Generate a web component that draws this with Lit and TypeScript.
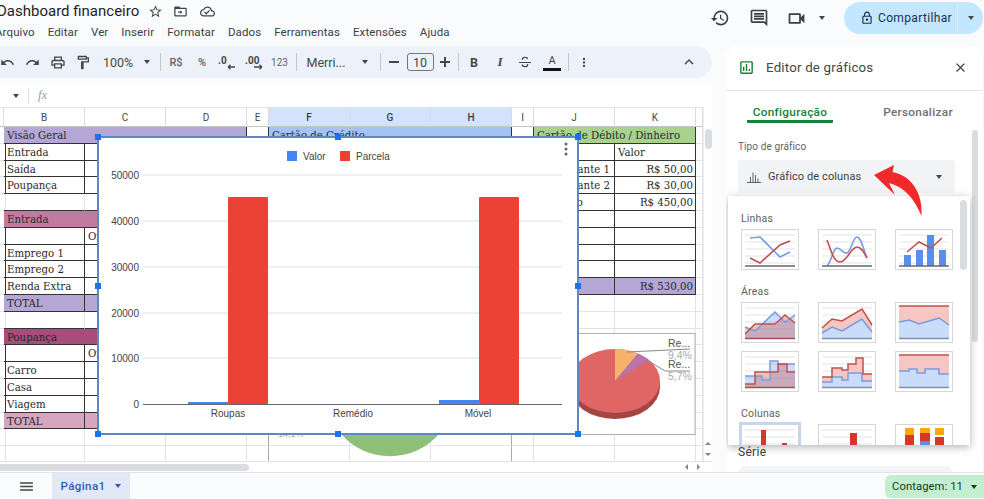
import { LitElement, html, css, svg, nothing } from "lit";
import { customElement } from "lit/decorators.js";
import { styleMap } from "lit/directives/style-map.js";

const ic = (d: string, s = 18, c = "#444746") => html`<svg width=${s} height=${s} viewBox="0 0 24 24" fill=${c}><path d=${d}></path></svg>`;
const P = {
  undo: "M12.5 8c-2.65 0-5.05.99-6.9 2.6L2 7v9h9l-3.62-3.62c1.39-1.16 3.16-1.88 5.12-1.88 3.54 0 6.55 2.31 7.6 5.5l2.37-.78C21.08 11.03 17.15 8 12.5 8z",
  redo: "M18.4 10.6C16.55 8.99 14.15 8 11.5 8c-4.65 0-8.58 3.03-9.96 7.22L3.9 16c1.05-3.19 4.05-5.5 7.6-5.5 1.95 0 3.73.72 5.12 1.88L13 16h9V7l-3.6 3.6z",
  print: "M19 8h-1V3H6v5H5c-1.66 0-3 1.34-3 3v6h4v4h12v-4h4v-6c0-1.66-1.34-3-3-3zM8 5h8v3H8V5zm8 12v2H8v-4h8v2zm2-2v-2H6v2H4v-4c0-.55.45-1 1-1h14c.55 0 1 .45 1 1v4h-2z",
  paint: "M18 4V3c0-.55-.45-1-1-1H5c-.55 0-1 .45-1 1v4c0 .55.45 1 1 1h12c.55 0 1-.45 1-1V6h1v4H9v11c0 .55.45 1 1 1h2c.55 0 1-.45 1-1v-9h8V4h-3zm-2 2H6V4h10v2zm-5 14h-.01v-8H11v8z",
  star: "M22 9.24l-7.19-.62L12 2 9.19 8.63 2 9.24l5.46 4.73L5.82 21 12 17.27 18.18 21l-1.63-7.03L22 9.24zM12 15.4l-3.76 2.27 1-4.28-3.32-2.88 4.38-.38L12 6.1l1.71 4.04 4.38.38-3.32 2.88 1 4.28L12 15.4z",
  folder: "M20 6h-8l-2-2H4c-1.1 0-2 .9-2 2v12c0 1.1.9 2 2 2h16c1.1 0 2-.9 2-2V8c0-1.1-.9-2-2-2zm0 12H4V8h16v10zM12 10v2H8v2h4v2l3-3z",
  cloud: "M19.35 10.04C18.67 6.59 15.64 4 12 4 9.11 4 6.6 5.64 5.35 8.04 2.34 8.36 0 10.91 0 14c0 3.31 2.69 6 6 6h13c2.76 0 5-2.24 5-5 0-2.64-2.05-4.78-4.65-4.96zM19 18H6c-2.21 0-4-1.79-4-4 0-2.05 1.53-3.76 3.56-3.97l1.07-.11.5-.95C8.08 7.14 9.94 6 12 6c2.62 0 4.88 1.86 5.39 4.43l.3 1.5 1.53.11c1.56.1 2.78 1.41 2.78 2.96 0 1.65-1.35 3-3 3zm-9-3.82L7.91 12.09 6.5 13.5 10 17l6.01-6.01-1.41-1.41z",
  history: "M13 3a9 9 0 0 0-9 9H1l3.89 3.89.07.14L9 12H6c0-3.87 3.13-7 7-7s7 3.13 7 7-3.13 7-7 7c-1.93 0-3.68-.79-4.94-2.06l-1.42 1.42A8.954 8.954 0 0 0 13 21a9 9 0 0 0 0-18zm-1 5v5l4.28 2.54.72-1.21-3.5-2.08V8H12z",
  comment: "M21.99 4c0-1.1-.89-2-1.99-2H4c-1.1 0-2 .9-2 2v12c0 1.1.9 2 2 2h14l4 4-.01-18zM20 4v13.17L18.83 16H4V4h16zM6 12h12v2H6zm0-3h12v2H6zm0-3h12v2H6z",
  video: "M17 10.5V7c0-.55-.45-1-1-1H4C3.45 6 3 6.45 3 7v10c0 .55.45 1 1 1h12c.55 0 1-.45 1-1v-3.5l4 4v-11l-4 4zM15 16H5V8h10v8z",
  lock: "M18 8h-1V6c0-2.76-2.24-5-5-5S7 3.24 7 6v2H6c-1.1 0-2 .9-2 2v10c0 1.1.9 2 2 2h12c1.1 0 2-.9 2-2V10c0-1.1-.9-2-2-2zM9 6c0-1.66 1.34-3 3-3s3 1.34 3 3v2H9V6zm9 14H6V10h12v10zm-6-3c1.1 0 2-.9 2-2s-.9-2-2-2-2 .9-2 2 .9 2 2 2z",
  close: "M19 6.41L17.59 5 12 10.59 6.41 5 5 6.41 10.59 12 5 17.59 6.41 19 12 13.41 17.59 19 19 17.59 13.41 12z",
  strike: "M3 12h18v1.6H3zM7 7.5C7 5.4 9.2 4 12 4c2.6 0 4.5 1.2 4.9 3.3l-2 .4C14.6 6.500 13.500 6 12 6c-1.600 0-2.900.7-2.900 1.700 0 .4.100.8.400 1.100H7.300C7.100 8.400 7 8 7 7.500zM17 16c0 2.400-2.200 4-5 4-2.800 0-5-1.300-5.400-3.800l2-.3C8.900 17.300 10.200 18 12 18c1.700 0 3-.8 3-2 0-.3-.1-.6-.2-.9h2c.1.300.2.600.2.900z",
  kebab: "M12 8a2 2 0 1 0 0-4 2 2 0 0 0 0 4zm0 2a2 2 0 1 0 0 4 2 2 0 0 0 0-4zm0 6a2 2 0 1 0 0 4 2 2 0 0 0 0-4z",
  chev: "M7.41 15.41L12 10.83l4.59 4.58L18 14l-6-6-6 6z",
  menu: "M3 18h18v-2H3v2zm0-5h18v-2H3v2zm0-7v2h18V6H3z",
};

const G = "#e3e3e3";
const gridLines = (ys: number[]) => ys.map((y) => svg`<line x1="4" x2="54" y1=${y} y2=${y} stroke=${G} stroke-width="1"></line>`);
const BL = "#7b9be0", RD = "#c0504d";
function area(blue: string, red: string, stacked = false) {
  const fill = (p: string) => `4,36 ${p} 54,36`;
  return svg`${gridLines([6, 13, 20, 27])}
    ${stacked ? svg`<polygon points=${fill(red)} fill="#f5c6c2"/><polygon points=${fill(blue)} fill="#c9dcf9"/>` : svg`<polygon points=${fill(blue)} fill="#5b8def" fill-opacity=".3"/><polygon points=${fill(red)} fill="#c0504d" fill-opacity=".35"/>`}
    <polyline points=${blue} fill="none" stroke=${BL} stroke-width="1.5"/><polyline points=${red} fill="none" stroke=${RD} stroke-width="1.5"/>
    <line x1="4" x2="54" y1="36.500" y2="36.500" stroke=${stacked ? "#8090a8" : "#a05050"} stroke-width="1.4"/>`;
}
function area100(blue: string) {
  return svg`<rect x="4" y="4" width="50" height="32" fill="#f5c6c2"/><polygon points=${`4,36 ${blue} 54,36`} fill="#c9dcf9"/>
    <polyline points=${blue} fill="none" stroke=${BL} stroke-width="1.5"/><line x1="4" x2="54" y1="4" y2="4" stroke=${RD} stroke-width="1.5"/>
    <line x1="4" x2="54" y1="36.500" y2="36.500" stroke="#8090a8" stroke-width="1.4"/>`;
}
const thumbs: Record<string, unknown> = {
  l1: svg`${gridLines([6, 13, 20, 27, 34])}<polyline points="9,9 19,8 39,28 49,23" fill="none" stroke=${BL} stroke-width="1.6"/><polyline points="9,29 19,34 39,16 49,12" fill="none" stroke=${RD} stroke-width="1.6"/><line x1="4" x2="54" y1="37" y2="37" stroke="#666" stroke-width="1.4"/>`,
  l2: svg`${gridLines([6, 13, 20, 27, 34])}<path d="M9 37C14 32 15 19 19 19C23 19 25 25 29 24C33 23 35 8 39 8C43 8 46 22 49 29" fill="none" stroke=${BL} stroke-width="1.6"/><path d="M9 11C12 18 15 33 22 33C29 33 33 18 39 18C44 18 46 24 49 29" fill="none" stroke=${RD} stroke-width="1.6"/><line x1="4" x2="54" y1="37" y2="37" stroke="#666" stroke-width="1.4"/>`,
  l3: svg`${gridLines([6, 13, 20, 27, 34])}<g fill="#5b8def"><rect x="9" y="26" width="7" height="11"/><rect x="21" y="21" width="7" height="16"/><rect x="32" y="6" width="7" height="31"/><rect x="44" y="21" width="7" height="16"/></g><polyline points="12,23 24,13 36,19 47,9" fill="none" stroke=${RD} stroke-width="1.6"/><line x1="4" x2="54" y1="37" y2="37" stroke="#666" stroke-width="1.4"/>`,
  a1: area("4,25 14,29 34,10 44,20 54,13", "4,32 14,22 34,22 44,13 54,21"),
  a2: area("4,31 14,25 24,29 44,17 54,30", "4,26 14,17 24,19 44,7 54,23", true),
  a3: area100("4,20 14,18 24,22 44,16 54,23"),
  s1: area("4,25 21,25 21,29 29,29 29,10 37,10 37,13 54,13", "4,33 14,33 14,21 37,21 37,13 46,13 46,21 54,21"),
  s2: area("4,31 14,31 14,26 24,26 24,29 30,29 30,22 44,22 44,30 54,30", "4,26 14,26 14,17 24,17 24,19 30,19 30,13 38,13 38,7 45,7 45,23 54,23", true),
  s3: area100("4,20 14,20 14,18 22,18 22,22 30,22 30,18 44,18 44,23 54,23"),
  c1: svg`${gridLines([6, 13, 20, 27, 34])}<g fill="#d9362b"><rect x="20" y="6" width="5" height="31"/><rect x="41" y="19" width="5" height="18"/></g>`,
  c2: svg`${gridLines([6, 13, 20, 27, 34])}<g fill="#d9362b"><rect x="32" y="9" width="7" height="28"/><rect x="21" y="21" width="5" height="16"/></g>`,
  c3: svg`<g fill="#f7a90c"><rect x="10" y="4" width="9" height="7"/><rect x="25" y="4" width="10" height="7"/><rect x="40" y="4" width="9" height="7"/></g><g fill="#d9362b"><rect x="10" y="11" width="9" height="26"/><rect x="25" y="9" width="10" height="8"/><rect x="40" y="13" width="9" height="24"/></g><rect x="25" y="17" width="10" height="20" fill="#5b8def"/>`,
};

type Tool = { c: number; w: number; t: unknown; k?: string };
const tools: Tool[] = [
  { c: 7, w: 16, t: ic(P.undo, 15) },
  { c: 32, w: 16, t: ic(P.redo, 15) },
  { c: 58, w: 16, t: ic(P.print, 17) },
  { c: 83, w: 16, t: ic(P.paint, 17) },
  { c: 118, w: 34, t: "100%", k: "txt" },
  { c: 147, w: 10, t: html`<i class="caret"></i>` },
  { c: 160.5, w: 1, t: nothing, k: "sep" },
  { c: 176, w: 20, t: "R$", k: "sm" },
  { c: 202, w: 16, t: "%", k: "sm" },
  { c: 227, w: 22, t: html`<svg width="22" height="18" viewBox="0 0 22 18"><text x="2" y="11" font-size="10" font-weight="700" font-family="Roboto" fill="#444746">.0</text><path d="M19 14h-7m0 0l2.500-2.200M12 14l2.500 2.200" stroke="#444746" fill="none" stroke-width="1.300"/></svg>` },
  { c: 255, w: 24, t: html`<svg width="24" height="18" viewBox="0 0 24 18"><text x="2" y="11" font-size="10" font-weight="700" font-family="Roboto" fill="#444746">.00</text><path d="M11 14h8m0 0l-2.500-2.200M19 14l-2.500 2.200" stroke="#444746" fill="none" stroke-width="1.300"/></svg>` },
  { c: 279.5, w: 18, t: "123", k: "xs" },
  { c: 296, w: 1, t: nothing, k: "sep" },
  { c: 326, w: 40, t: "Merri...", k: "txt" },
  { c: 365, w: 10, t: html`<i class="caret"></i>` },
  { c: 380.5, w: 1, t: nothing, k: "sep" },
  { c: 394, w: 12, t: html`<i class="dash"></i>` },
  { c: 420, w: 27, t: "10", k: "size" },
  { c: 445, w: 12, t: html`<i class="dash plus"></i>` },
  { c: 458.5, w: 1, t: nothing, k: "sep" },
  { c: 474, w: 14, t: "B", k: "bold" },
  { c: 500, w: 14, t: "I", k: "ital" },
  { c: 525, w: 16, t: ic(P.strike, 16) },
  { c: 552, w: 20, t: html`<span class="fontcolor">A</span>`, k: "" },
  { c: 568.5, w: 1, t: nothing, k: "sep" },
  { c: 584, w: 14, t: ic(P.kebab, 15) },
  { c: 689, w: 18, t: ic(P.chev, 18) },
];

const leftRows = [0, 1, 2, 3, 5, 6, 7, 8, 9, 10, 12, 13, 14, 15, 16, 17];
const headers: Record<string, { span: number; cls: string; text: string }> = {
  "0,1": { span: 3, cls: "f-purple", text: "Visão Geral" },
  "5,1": { span: 3, cls: "f-rose", text: "Entrada" },
  "12,1": { span: 3, cls: "f-wine", text: "Poupança" },
  "0,5": { span: 3, cls: "f-blue", text: "Cartão de Crédito" },
  "0,9": { span: 2, cls: "f-green", text: "Cartão de Débito / Dinheiro" },
};
const texts: Record<string, string> = {
  "1,1": "Entrada", "2,1": "Saída", "3,1": "Poupança",
  "6,2": "Orçado", "7,1": "Emprego 1", "8,1": "Emprego 2", "9,1": "Renda Extra", "10,1": "TOTAL",
  "13,2": "Orçado", "14,1": "Carro", "15,1": "Casa", "16,1": "Viagem", "17,1": "TOTAL",
  "1,10": "Valor", "2,9": "Restaurante 1", "3,9": "Restaurante 2", "4,9": "Mercado",
  "2,10": "R$ 50,00", "3,10": "R$ 30,00", "4,10": "R$ 450,00", "9,10": "R$ 530,00",
};
const colNames = ["", "B", "C", "D", "E", "F", "G", "H", "I", "J", "K", ""];

@customElement("app-root")
export class AppRoot extends LitElement {
  static styles = css`
    :host { display: block; width: 984px; height: 499px; overflow: hidden; background: #f9fbfd; font-family: Roboto, "Open Sans", sans-serif; color: #444746; }
    .app { display: flex; flex-direction: column; height: 499px; }
    svg { display: block; }

    .head { height: 46px; display: flex; justify-content: space-between; flex: none; }
    .titles { margin-left: -5px; }
    .titlerow { display: flex; align-items: center; height: 22px; }
    .title { font-size: 15px; color: #1f1f1f; width: 152px; white-space: nowrap; padding-left: 2px; box-sizing: border-box; }
    .titleicons { display: flex; gap: 10px; margin-left: 1px; }
    .titleicons svg:last-child { margin-left: 2px; }
    .menu { display: flex; gap: 13px; font-size: 11.500px; letter-spacing: .1px; margin-top: 3px; color: #3c4043; }
    .actions { display: flex; align-items: flex-start; padding-top: 2px; padding-right: 1px; }
    .acti { height: 32px; display: flex; align-items: center; }
    .a2 { margin-left: 19px; }
    .a3 { margin-left: 17px; }
    .a4 { margin-left: 12px; }
    .share { display: flex; height: 32px; width: 139px; background: #c2e7ff; border-radius: 16px; margin-left: 19px; color: #17324d; font-size: 12px; letter-spacing: .35px; }
    .share .l { flex: 1; display: flex; align-items: center; gap: 4px; padding-left: 16px; border-right: 1px solid #d8effd; }
    .share .r { width: 25px; display: flex; align-items: center; justify-content: center; }
    .caret { display: block; width: 0; height: 0; border: 3.500px solid transparent; border-top: 4px solid #444746; border-bottom: 0; }

    .main { flex: 1; display: flex; min-height: 0; }
    .left { width: 712px; display: flex; flex-direction: column; flex: none; }
    .toolbar { height: 32px; background: #edf2fa; border-radius: 0 16px 16px 0; display: flex; align-items: center; flex: none; font-size: 12px; }
    .tool { display: flex; align-items: center; justify-content: center; flex: none; white-space: nowrap; height: 18px; }
    .tool.txt { font-size: 12.500px; color: #444746; }
    .tool.sm { font-size: 11px; color: #5f6368; font-weight: 500; }
    .tool.xs { font-size: 10px; color: #5f6368; }
    .tool.sep { background: #c7c7c7; height: 18px; }
    .tool.size { border: 1px solid #747775; border-radius: 3px; box-sizing: border-box; font-size: 12.500px; height: 18px; }
    .tool.bold { font-weight: 700; font-size: 12.500px; }
    .tool.ital { font-style: italic; font-weight: 700; font-size: 13px; font-family: "Liberation Serif", serif; }
    .dash { display: block; width: 10px; height: 1.500px; background: #444746; position: relative; }
    .plus::after { content: ""; position: absolute; left: 4.250px; top: -4.250px; width: 1.500px; height: 10px; background: #444746; }
    .fontcolor { display: block; width: 18px; text-align: center; font-size: 11px; line-height: 14px; border-bottom: 3px solid #111; color: #444746; }

    .fbar { margin-top: 6px; height: 23px; background: #fff; display: flex; align-items: center; flex: none; position: relative; }
    .fbar .caret { margin-left: 13px; }
    .fdiv { width: 1px; height: 14px; background: #dadce0; margin-left: 9px; }
    .fx { font-family: "Liberation Serif", serif; font-style: italic; color: #9aa0a6; font-size: 12.500px; margin-left: 9px; }

    .sheet { position: relative; flex: 1; display: flex; flex-direction: column; background: #fff; min-height: 0; }
    .gridwrap { display: flex; height: 354px; flex: none; }
    .grid { width: 703px; flex: none; overflow: hidden; display: grid; grid-template-columns: 4px repeat(3, 81px) 22px repeat(3, 81px) 22px repeat(2, 81px) 7px; grid-template-rows: 20px repeat(20, 16.800px); font-family: "DejaVu Serif", serif; font-size: 10.200px; color: #2a2a2a; }
    .ch { border-right: 1px solid #dadce0; border-bottom: 1px solid #c4c7c5; border-top: 1px solid #e3e3e3; font: 10px Roboto, sans-serif; color: #444746; display: flex; align-items: center; justify-content: center; box-sizing: border-box; }
    .ch.sel { background: #d3e3fd; font-weight: 500; color: #3c4043; }
    .cell { box-sizing: border-box; border-right: 1px solid #e3e3e3; border-bottom: 1px solid #e3e3e3; padding: 1px 2px 0 3px; white-space: nowrap; line-height: 15px; min-width: 0; }
    .cell.dr { border-right-color: #333; }
    .cell.db { border-bottom-color: #333; }
    .cell.gr { border-right: 1.500px solid #aaa; }
    .cell.right { text-align: right; }
    .f-purple { background: #b4a7d6; }
    .f-rose { background: #c27ba0; }
    .f-wine { background: #a64d79; }
    .f-pink { background: #d5a6bd; }
    .f-blue { background: #a4c2f4; }
    .f-green { background: #a9d18e; }
    .vbar { width: 9px; flex: none; background: #fff; position: relative; display: flex; flex-direction: column; justify-content: flex-end; border-left: 1px solid #eee; box-sizing: border-box; padding-bottom: 1px; }
    .vthumb { position: absolute; top: 22px; left: 1px; width: 7px; height: 20px; background: #dadce0; border-radius: 4px; }
    .arr { height: 11px; display: flex; align-items: center; justify-content: center; }
    .arr i { display: block; border: 3px solid transparent; }
    .arr .up { border-bottom: 3px solid #80868b; border-top: 0; }
    .arr .dn { border-top: 3px solid #80868b; border-bottom: 0; }
    .hbar { height: 11px; flex: none; background: #fff; border-top: 1px solid #e3e3e3; box-sizing: border-box; display: flex; align-items: center; justify-content: space-between; padding-right: 9px; }
    .hthumb { width: 249px; height: 7px; background: #dadce0; border-radius: 0 4px 4px 0; }
    .harr { display: flex; gap: 9px; margin-right: 3px; }
    .harr i { display: block; border: 3px solid transparent; }
    .harr .lf { border-right: 3px solid #80868b; border-left: 0; }
    .harr .rt { border-left: 3px solid #80868b; border-right: 0; }

    .under { position: absolute; }
    .pie { left: 560px; top: 226px; }
    .donut { left: 270px; top: 327px; }
    .chart { position: absolute; left: 98px; top: 30px; width: 480px; height: 297px; background: #fff; outline: 2px solid #5a8ac6; outline-offset: -1px; }
    .chart text { font-family: "Liberation Sans", sans-serif; font-size: 10px; fill: #444; }
    .hd { position: absolute; width: 6px; height: 6px; background: #1a73e8; margin: -3px 0 0 -3px; }
    .tl { left: 0; top: 0; } .tc { left: 50%; top: 0; } .tr { left: 100%; top: 0; }
    .ml { left: 0; top: 50%; } .mr { left: 100%; top: 50%; }
    .bl { left: 0; top: 100%; } .bc { left: 50%; top: 100%; } .br { left: 100%; top: 100%; }

    .panel { margin-left: 14px; width: 256px; flex: none; background: #fff; border-radius: 12px 12px 0 0; position: relative; display: flex; flex-direction: column; overflow: hidden; }
    .phead { height: 45px; flex: none; display: flex; align-items: center; padding: 0 14px 2px 12px; border-bottom: 1px solid #e3e3e3; box-sizing: border-box; }
    .ptitle { font-size: 13.300px; margin-left: 11px; flex: 1; color: #444746; letter-spacing: .2px; }
    .tabs { display: flex; height: 32px; flex: none; font-size: 11.800px; letter-spacing: .3px; font-weight: 500; color: #6b6f73; }
    .tab { display: flex; align-items: center; justify-content: center; }
    .tab.on { margin-left: 21px; width: 86px; color: #188038; border-bottom: 3px solid #188038; border-radius: 0 0 1px 1px; box-sizing: border-box; padding-top: 12px; }
    .tab.off { margin-left: 51px; width: 68px; padding-top: 9px; }
    .pbody { padding: 18px 0 0 12px; flex: 1; min-height: 0; }
    .plabel { font-size: 10px; color: #5f6368; line-height: 12px; letter-spacing: .1px; }
    .dd { margin-top: 7px; width: 217px; height: 33px; background: #f1f3f4; border-radius: 3px; display: flex; align-items: center; padding: 0 13px 0 8px; box-sizing: border-box; font-size: 11px; letter-spacing: .1px; color: #3c4043; }
    .dd span { flex: 1; margin-left: 6px; }
    .serie { margin-top: 252px; font-size: 12px; line-height: 15px; color: #3c4043; letter-spacing: .3px; }
    .sfield { margin-top: 6px; width: 215px; height: 10px; background: #f3f4f5; border-radius: 8px 8px 0 0; }
    .pscroll { position: absolute; left: 246px; top: 84px; width: 6px; height: 212px; background: #dadce0; border-radius: 3px; }
    .popup { position: absolute; left: 2px; top: 150px; width: 242px; height: 249px; background: #fff; box-shadow: 0 2px 8px rgba(60, 64, 67, .4); overflow: hidden; padding: 16px 0 0 13px; box-sizing: border-box; color: #555; font-size: 10.500px; }
    .popthumb { position: absolute; left: 232px; top: 4px; width: 7px; height: 70px; background: #dadce0; border-radius: 4px; }
    .sect { line-height: 14px; height: 14px; letter-spacing: .2px; color: #5f5f5f; }
    .tgrid { display: grid; grid-template-columns: repeat(3, 58px); column-gap: 19px; row-gap: 8px; margin-top: 3px; margin-bottom: 15px; }
    .thumb { width: 58px; height: 41px; box-sizing: border-box; border: 1.500px solid #d6d6d6; background: #fff; position: relative; }
    .thumb.sel { outline: 2px solid #c6d6ef; border-color: #c6d6ef; }
    .thumb svg { margin: -1.500px; }
    .redarrow { position: absolute; left: 0; top: 0; pointer-events: none; }

    .bottom { height: 27px; flex: none; display: flex; align-items: stretch; border-top: 1px solid #e3e3e3; box-sizing: border-box; }
    .burger { width: 52px; display: flex; align-items: center; justify-content: center; }
    .pg { width: 78px; background: #e1e9f7; display: flex; align-items: center; justify-content: center; gap: 10px; color: #2b5cb0; font-size: 11.500px; font-weight: 500; letter-spacing: .4px; }
    .pg .caret { border-top-color: #2b5cb0; }
    .spacer { flex: 1; }
    .chip { width: 99px; margin-top: 2px; margin-bottom: 1px; background: #c4eed0; border-radius: 6px 0 0 6px; display: flex; align-items: center; justify-content: center; gap: 8px; color: #0f3d1e; font-size: 11.200px; letter-spacing: .1px; }
    .chip .caret { border-top-color: #0f3d1e; }
  `;

  private cells() {
    const out: unknown[] = [];
    colNames.forEach((n, c) => out.push(html`<div class="ch ${c >= 5 && c <= 7 ? "sel" : ""}">${n}</div>`));
    for (let r = 0; r < 20; r++) {
      let c = 0;
      while (c < 12) {
        const h = headers[`${r},${c}`];
        const inLeft = leftRows.includes(r);
        const cl: string[] = ["cell"];
        let span = 1;
        let text = texts[`${r},${c}`] ?? "";
        if (h) {
          span = h.span; text = h.text; cl.push(h.cls, "db", "dr");
        }
        if (c === 0 && inLeft) cl.push("dr");
        if (inLeft && c >= 1 && c <= 3) {
          cl.push("db");
          if (c === 1 || c === 3) cl.push("dr");
        }
        if ((r === 4 || r === 11) && c >= 1 && c <= 3) cl.push("db");
        if (r === 10 && c >= 1 && c <= 3) cl.push("f-purple");
        if (r === 17 && c >= 1 && c <= 3) cl.push("f-pink");
        if (r === 0 && (c === 4 || c === 8)) cl.push("dr");
        if (r >= 1 && r <= 9 && (c === 9 || c === 10)) {
          cl.push("db", "dr");
          if (r === 9) cl.push("f-purple");
        }
        if (r >= 1 && r <= 9 && c === 8) cl.push("dr");
        if (r >= 18 && (c === 4 || c === 7)) cl.push("gr");
        if (c === 10 && r > 1) cl.push("right");
        const st = span > 1 ? { gridColumn: `span ${span}` } : {};
        out.push(html`<div class=${cl.join(" ")} style=${styleMap(st)}>${text}</div>`);
        c += span;
      }
    }
    return out;
  }

  private toolbar() {
    let end = 0;
    return tools.map((t) => {
      const ml = t.c - t.w / 2 - end;
      end = t.c + t.w / 2;
      return html`<div class="tool ${t.k ?? ""}" style=${styleMap({ width: `${t.w}px`, marginLeft: `${ml}px` })}>${t.t}</div>`;
    });
  }

  private chart() {
    const ticks = [[50000, 175], [40000, 221], [30000, 267], [20000, 313], [10000, 358]];
    return html`<svg width="480" height="297" viewBox="98 137 480 297">
      ${ticks.map(([v, y]) => svg`<line x1="143" x2="562" y1=${y} y2=${y} stroke="#e0e0e0"/><text x="139" y=${y + 3.5} text-anchor="end">${v}</text>`)}
      <rect x="287" y="151" width="10" height="10" fill="#4285f4"/><text x="303" y="159.500">Valor</text>
      <rect x="340" y="151" width="10" height="10" fill="#ea4335"/><text x="356" y="159.500">Parcela</text>
      <rect x="228" y="197" width="40" height="207" rx="1" fill="#ea4335"/>
      <rect x="479" y="197" width="40" height="207" rx="1" fill="#ea4335"/>
      <rect x="188" y="402" width="40" height="2" fill="#4285f4"/>
      <rect x="439" y="400" width="40" height="4" fill="#4285f4"/>
      <line x1="143" x2="562" y1="404.500" y2="404.500" stroke="#666"/>
      <text x="139" y="407.500" text-anchor="end">0</text>
      <text x="228" y="416.500" text-anchor="middle">Roupas</text>
      <text x="353" y="416.500" text-anchor="middle">Remédio</text>
      <text x="478" y="416.500" text-anchor="middle">Móvel</text>
      <g fill="#666"><circle cx="566" cy="144" r="1.500"/><circle cx="566" cy="149" r="1.500"/><circle cx="566" cy="154" r="1.500"/></g>
    </svg>
    ${["tl", "tc", "tr", "ml", "mr", "bl", "bc", "br"].map((k) => html`<i class="hd ${k}"></i>`)}`;
  }

  private pie() {
    return html`<svg class="under pie" width="136" height="103" viewBox="560 333 136 103">
      <rect x="560" y="333.500" width="135" height="101" fill="#fff" stroke="#b0b0b0"/>
      <path d="M570 381v6a45 32 0 0 0 90 0v-6z" fill="#a64444"/>
      <ellipse cx="615" cy="381" rx="45" ry="32" fill="#e06666"/>
      <path d="M615 381V349A45 32 0 0 1 638 353.500z" fill="#f6b26b"/>
      <path d="M615 381L638 353.500A45 32 0 0 1 649 360z" fill="#b873a8"/>
      <path d="M627 352L690 349" stroke="#888" fill="none"/>
      <path d="M647 360L665 371H690" stroke="#888" fill="none"/>
      <g font-family="Liberation Sans" font-size="10.500">
        <text x="668" y="347" fill="#555">Re...</text><text x="668" y="359" fill="#aaa">9,4%</text>
        <text x="668" y="368" fill="#555">Re...</text><text x="668" y="380" fill="#aaa">5,7%</text>
      </g>
    </svg>`;
  }

  private donut() {
    return html`<svg class="under donut" width="241" height="27" viewBox="270 434 241 27">
      <path d="M341 434A65 65 0 0 0 439 434z" fill="#8fc07a"/>
      <text x="278" y="437" font-family="Liberation Sans" font-size="9" fill="#aaa">14,1%</text>
    </svg>`;
  }

  private th(k: string, sel = false) {
    return html`<div class="thumb ${sel ? "sel" : ""}"><svg width="58" height="41" viewBox="0 0 58 41">${thumbs[k]}</svg></div>`;
  }

  render() {
    return html`<div class="app">
      <header class="head">
        <div class="titles">
          <div class="titlerow"><div class="title">Dashboard financeiro</div>
            <div class="titleicons">${ic(P.star, 15)}${ic(P.folder, 15)}${ic(P.cloud, 15)}</div></div>
          <nav class="menu"><span>Arquivo</span><span>Editar</span><span>Ver</span><span>Inserir</span><span>Formatar</span><span>Dados</span><span>Ferramentas</span><span>Extensões</span><span>Ajuda</span></nav>
        </div>
        <div class="actions">
          <div class="acti">${ic(P.history, 20, "#3c4043")}</div>
          <div class="acti a2">${ic(P.comment, 20, "#3c4043")}</div>
          <div class="acti a3">${ic(P.video, 21, "#3c4043")}</div>
          <div class="acti a4"><i class="caret"></i></div>
          <div class="share"><div class="l">${ic(P.lock, 14, "#17324d")}Compartilhar</div><div class="r"><i class="caret"></i></div></div>
        </div>
      </header>
      <div class="main">
        <div class="left">
          <div class="toolbar">${this.toolbar()}</div>
          <div class="fbar"><i class="caret"></i><div class="fdiv"></div><div class="fx">fx</div></div>
          <div class="sheet">
            <div class="gridwrap">
              <div class="grid">${this.cells()}</div>
              <div class="vbar"><div class="vthumb"></div><div class="arr"><i class="up"></i></div><div class="arr"><i class="dn"></i></div></div>
            </div>
            <div class="hbar"><div class="hthumb"></div><div class="harr"><i class="lf"></i><i class="rt"></i></div></div>
            ${this.pie()}
            ${this.donut()}
            <div class="chart">${this.chart()}</div>
          </div>
        </div>
        <aside class="panel">
          <div class="phead">
            <svg width="17" height="17" viewBox="0 0 24 24" fill="#188038"><path d="M19 3H5c-1.100 0-2 .9-2 2v14c0 1.100.9 2 2 2h14c1.100 0 2-.9 2-2V5c0-1.100-.9-2-2-2zm0 16H5V5h14v14zM7 11h2v6H7zm4-4h2v10h-2zm4 7h2v3h-2z"/></svg>
            <div class="ptitle">Editor de gráficos</div>
            ${ic(P.close, 15)}
          </div>
          <div class="tabs"><div class="tab on">Configuração</div><div class="tab off">Personalizar</div></div>
          <div class="pbody">
            <div class="plabel">Tipo de gráfico</div>
            <div class="dd">
              <svg width="16" height="16" viewBox="0 0 16 16" stroke="#5f6368" stroke-width="1" fill="none"><path d="M1 13.500h14M4.500 13V8M7 13V3.500M9.500 13V6M12 13V9.500"/></svg>
              <span>Gráfico de colunas</span><i class="caret"></i>
            </div>
            <div class="serie">Série</div>
            <div class="sfield"></div>
          </div>
          <div class="pscroll"></div>
          <div class="popup">
            <div class="popthumb"></div>
            <div class="sect">Linhas</div>
            <div class="tgrid">${this.th("l1")}${this.th("l2")}${this.th("l3")}</div>
            <div class="sect">Áreas</div>
            <div class="tgrid">${this.th("a1")}${this.th("a2")}${this.th("a3")}${this.th("s1")}${this.th("s2")}${this.th("s3")}</div>
            <div class="sect">Colunas</div>
            <div class="tgrid">${this.th("c1", true)}${this.th("c2")}${this.th("c3")}</div>
          </div>
          <svg class="redarrow" width="256" height="200" viewBox="726 46 256 200"><path d="M874 175L894 165L892.500 172C913 176 923 195 921.500 216C915 200 905 187 889 183L895 195Z" fill="#f02a2a"/></svg>
        </aside>
      </div>
      <footer class="bottom">
        <div class="burger">${ic(P.menu, 17)}</div>
        <div class="pg">Página1<i class="caret"></i></div>
        <div class="spacer"></div>
        <div class="chip">Contagem: 11<i class="caret"></i></div>
      </footer>
    </div>`;
  }
}
